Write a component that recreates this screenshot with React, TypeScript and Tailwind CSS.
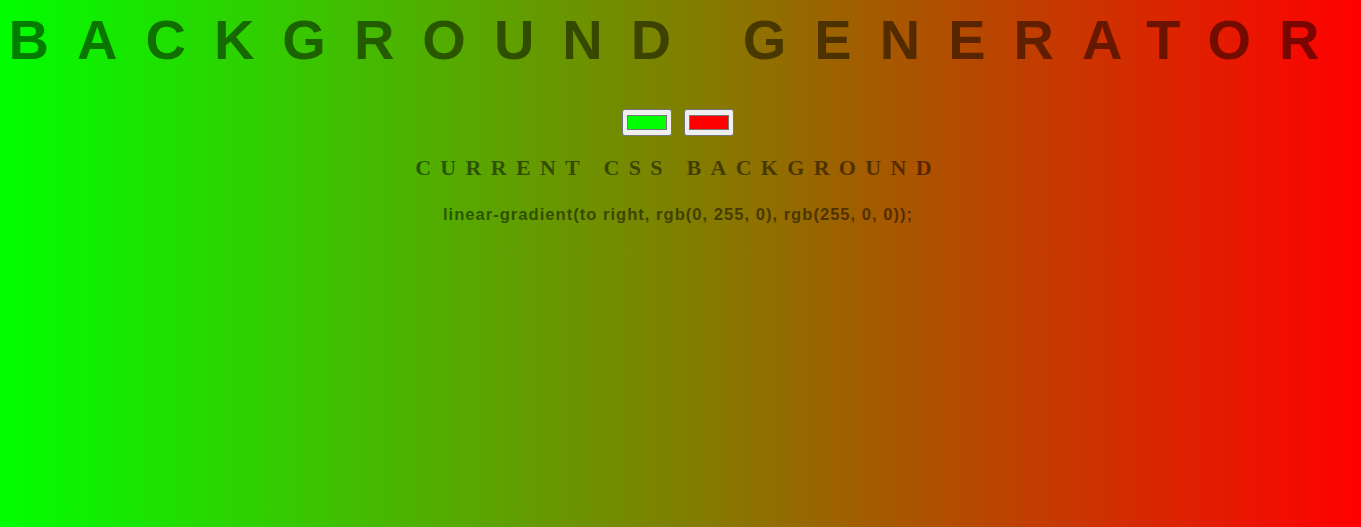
import React from "react";

function Swatch({ color }: { color: string }) {
  return (
    <div className="w-[50px] h-[27px] bg-[#efefef] border border-[#767676] rounded-[3px] px-[4px] py-[5px] box-border">
      <div className="w-full h-full border border-[#777777]" style={{ backgroundColor: color }} />
    </div>
  );
}

export default function App() {
  return (
    <div
      className="min-h-screen w-full bg-[linear-gradient(to_right,rgb(0,255,0),rgb(255,0,0))] text-center pr-[5px] pt-[8px]"
    >
      <h1 className="font-['Liberation_Sans',Arial,sans-serif] font-bold text-[56px] leading-[64px] tracking-[28px] text-black/50 whitespace-nowrap uppercase">
        Background Generator
      </h1>
      <div className="flex justify-center gap-[12px] mt-[37px]">
        <Swatch color="#00ff00" />
        <Swatch color="#ff0000" />
      </div>
      <h3 className="mt-[19px] font-['Liberation_Serif','Times_New_Roman',serif] font-bold text-[22px] leading-[26px] tracking-[9.3px] text-black/50 uppercase whitespace-nowrap">
        Current CSS Background
      </h3>
      <p className="mt-[25px] font-['Liberation_Sans',Arial,sans-serif] font-bold text-[16.6px] leading-[18px] tracking-[1px] text-black/50">
        linear-gradient(to right, rgb(0, 255, 0), rgb(255, 0, 0));
      </p>
    </div>
  );
}
